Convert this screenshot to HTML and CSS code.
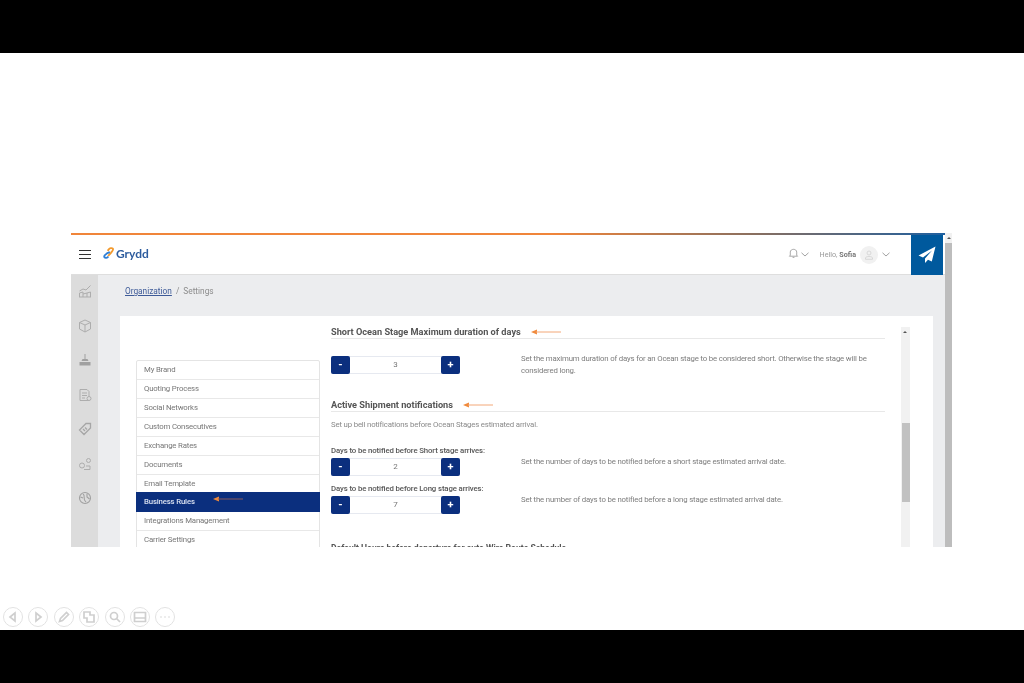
FILE: index.html
```html
<!DOCTYPE html>
<html lang="en">
<head>
    <meta charset="UTF-8">
    <meta name="viewport" content="width=device-width, initial-scale=1.0">
    <title>Grydd - Settings</title>
    <link rel="stylesheet" href="styles.css">
</head>
<body>
    <div class="letterbox"></div>
    <div class="slide">
        <div class="app">
            <div class="app-main">
                <div class="top-line"></div>
                <header class="header">
                    <div class="hamburger"><span></span><span></span><span></span></div>
                    <svg class="logo-mark" viewBox="0 0 14 14" width="12" height="12" fill="none" stroke-width="2.2">
                        <path d="M6 10.5 L9.5 6.5 C10.5 5 12.5 3.5 11.5 2 C10.5 .8 8 1 6.5 3 L5.5 4.5" stroke="#f39a2d"/>
                        <path d="M8 6 L4.5 7.5 C3 8.5 1 10 1.5 11.7 C2.5 13.2 5 13 6.2 11" stroke="#2f7fd6"/>
                    </svg>
                    <span class="logo-text">Grydd</span>
                    <div class="header-right">
                        <svg class="bell" viewBox="0 0 12 12" width="11" height="12" fill="none" stroke="#8a8a8a" stroke-width=".8">
                            <path d="M2.5 8.5 V5 C2.5 1 9.5 1 9.5 5 V8.5 L10.5 9.5 H1.5 Z M5 10.8 H7"/>
                        </svg>
                        <svg class="chev" viewBox="0 0 8 5" width="8" height="5" fill="none" stroke="#8a8a8a" stroke-width=".8"><path d="M.5 .8 L4 4 L7.5 .8"/></svg>
                        <span class="hello">Hello, <b>Sofia</b></span>
                        <div class="avatar">
                            <svg viewBox="0 0 10 10" width="10" height="10" fill="none" stroke="#d2d2d2" stroke-width=".8"><circle cx="5" cy="3" r="2"/><path d="M1.5 9.3 V8 C1.5 6 8.5 6 8.5 8 V9.3 Z"/></svg>
                        </div>
                        <svg class="chev chev-user" viewBox="0 0 8 5" width="8" height="5" fill="none" stroke="#8a8a8a" stroke-width=".8"><path d="M.5 .8 L4 4 L7.5 .8"/></svg>
                        <div class="send-tile">
                            <svg viewBox="0 0 18 18" width="18" height="18" fill="#fff"><path d="M17.5 .5 L.5 9.5 L5 11.5 L14 4.5 L7 12.5 L7 17 L10 13.8 L13.8 15.5 Z"/></svg>
                        </div>
                    </div>
                </header>
                <div class="body-row">
                    <nav class="sidebar">
                        <svg viewBox="0 0 14 14" width="14" height="14" fill="none" stroke="#adadad" stroke-width="1"><path d="M1 13 H13 M1.5 13 V9 L5 8 V13 M5 10 L9 9 V13 M9 9 L12.5 8 V13 M1.5 7 L5 5 L8 6 L12.5 1.5"/></svg>
                        <svg viewBox="0 0 14 14" width="14" height="14" fill="none" stroke="#adadad" stroke-width="1"><path d="M7 1 L12.5 3.5 V10 L7 13 L1.5 10 V3.5 Z M1.5 3.5 L7 6 L12.5 3.5 M7 6 V13"/></svg>
                        <svg viewBox="0 0 14 14" width="14" height="14" fill="#a0a0a0"><path d="M6.5 1 H7.5 V6 H6.5 Z M4.5 6 H9.5 L10.5 8 H3.5 Z M1.5 9 H12.5 V12.5 H1.5 Z"/></svg>
                        <svg viewBox="0 0 14 14" width="14" height="14" fill="none" stroke="#adadad" stroke-width="1"><path d="M2 1.5 H9 L11 3.5 V12.5 H2 Z M4 5 H9 M4 7.5 H9 M4 10 H7"/><circle cx="11" cy="10.5" r="2" fill="#dcdcdc"/></svg>
                        <svg viewBox="0 0 14 14" width="14" height="14" fill="none" stroke="#a6a6a6" stroke-width="1.3"><path d="M8 1.5 H12.5 V6 L6 12.5 L1.5 8 Z M5 7 L7 9 M7 5.5 L9 7.5"/></svg>
                        <svg viewBox="0 0 14 14" width="14" height="14" fill="none" stroke="#adadad" stroke-width="1"><circle cx="4" cy="8.5" r="2.5"/><circle cx="10.5" cy="3.5" r="2"/><path d="M6 12.5 H12 M12 12.5 V9 H8"/></svg>
                        <svg viewBox="0 0 14 14" width="14" height="14" fill="none" stroke="#a0a0a0" stroke-width="1.1"><circle cx="7" cy="7" r="5.5"/><path d="M5 3 C8 5 4 8 8 11 M9 2.5 V6 L11.5 8 M2.5 6 L5 7"/></svg>
                    </nav>
                    <main class="content">
                        <div class="breadcrumb"><a href="#">Organization</a><span class="sep">/</span>Settings</div>
                        <div class="card">
                            <ul class="menu">
                                <li>My Brand</li>
                                <li>Quoting Process</li>
                                <li>Social Networks</li>
                                <li>Custom Consecutives</li>
                                <li>Exchange Rates</li>
                                <li>Documents</li>
                                <li>Email Template</li>
                                <li class="active">Business Rules<svg class="arrow arrow-menu" viewBox="0 0 30 6" width="30" height="6"><path d="M0 3 L6 .5 V5.5 Z" fill="#f08a3c"/><path d="M5 3 H30" stroke="#8a5a5a" stroke-width="1"/></svg></li>
                                <li>Integrations Management</li>
                                <li>Carrier Settings</li>
                            </ul>
                            <section class="rules">
                                <h2 class="rule-title">Short Ocean Stage Maximum duration of days<svg class="arrow" viewBox="0 0 30 6" width="30" height="6"><path d="M0 3 L6 .5 V5.5 Z" fill="#f08a3c"/><path d="M5 3 H30" stroke="#f3a878" stroke-width="1"/></svg></h2>
                                <div class="rule-row row-first">
                                    <div class="stepper"><button>-</button><span class="value">3</span><button>+</button></div>
                                    <p class="rule-desc">Set the maximum duration of days for an Ocean stage to be considered short. Otherwise the stage will be considered long.</p>
                                </div>
                                <h2 class="rule-title title-second">Active Shipment notifications<svg class="arrow" viewBox="0 0 30 6" width="30" height="6"><path d="M0 3 L6 .5 V5.5 Z" fill="#f08a3c"/><path d="M5 3 H30" stroke="#f3a878" stroke-width="1"/></svg></h2>
                                <p class="rule-intro">Set up bell notifications before Ocean Stages estimated arrival.</p>
                                <div class="field-label label-first">Days to be notified before Short stage arrives:</div>
                                <div class="rule-row">
                                    <div class="stepper"><button>-</button><span class="value">2</span><button>+</button></div>
                                    <p class="rule-desc">Set the number of days to be notified before a short stage estimated arrival date.</p>
                                </div>
                                <div class="field-label">Days to be notified before Long stage arrives:</div>
                                <div class="rule-row">
                                    <div class="stepper"><button>-</button><span class="value">7</span><button>+</button></div>
                                    <p class="rule-desc">Set the number of days to be notified before a long stage estimated arrival date.</p>
                                </div>
                                <h2 class="rule-title title-third">Default Hours before departure for auto Wire Route Schedule</h2>
                            </section>
                            <div class="inner-scroll"><span class="scroll-up"></span><span class="inner-thumb"></span></div>
                        </div>
                    </main>
                </div>
            </div>
            <div class="outer-scroll"><span class="scroll-up"></span><span class="outer-thumb"></span></div>
        </div>
        <div class="player">
            <span class="round"><svg viewBox="0 0 20 20" width="20" height="20"><path d="M12 6 L7 10 L12 14 Z"/></svg></span>
            <span class="round"><svg viewBox="0 0 20 20" width="20" height="20"><path d="M8 6 L13 10 L8 14 Z"/></svg></span>
            <span class="round"><svg viewBox="0 0 20 20" width="20" height="20"><path d="M5.5 14.5 L6.5 11.5 L12.5 5.5 L14.5 7.5 L8.5 13.5 Z"/></svg></span>
            <span class="round"><svg viewBox="0 0 20 20" width="20" height="20"><path d="M5 5 H11 V8 H15 V15 H8 V11 H5 Z"/></svg></span>
            <span class="round"><svg viewBox="0 0 20 20" width="20" height="20"><circle cx="9" cy="9" r="3.5"/><path d="M11.5 11.5 L15 15"/></svg></span>
            <span class="round"><svg viewBox="0 0 20 20" width="20" height="20"><path d="M4.5 5.5 H15.5 V14.5 H4.5 Z M4.5 11 H15.5"/></svg></span>
            <span class="round"><svg viewBox="0 0 20 20" width="20" height="20"><path d="M5.5 10 H6.5 M9.5 10 H10.5 M13.5 10 H14.5"/></svg></span>
        </div>
    </div>
    <div class="letterbox"></div>
</body>
</html>
```

FILE: styles.css
```css
/* slide frame */
html, body {
    margin: 0;
    height: 100%;
}
body {
    display: flex;
    flex-direction: column;
    height: 683px;
    overflow: hidden;
    background-color: #fff;
    font-family: 'Roboto', 'Liberation Sans', sans-serif;
    color: #666;
}
.letterbox {
    height: 53px;
    background-color: #000;
    flex: none;
}
.slide {
    flex: 1;
    display: flex;
    flex-direction: column;
    padding-top: 180px;
    box-sizing: border-box;
    min-height: 0;
}

/* the screen recorded in the slide */
.app {
    display: flex;
    width: 882px;
    height: 314px;
    margin-left: 71px;
    overflow: hidden;
    flex: none;
    filter: blur(0.45px);
}
.app-main {
    width: 874px;
    display: flex;
    flex-direction: column;
}
.top-line {
    height: 2px;
    background: linear-gradient(to right, #f0853a 0%, #f0853a 55%, #8a6f5f 78%, #1f5f9f 100%);
    flex: none;
}
.header {
    height: 39px;
    flex: none;
    display: flex;
    align-items: center;
    padding-left: 8px;
    background-color: #fff;
    border-bottom: 1px solid #dedede;
}
.hamburger {
    width: 12px;
    display: flex;
    flex-direction: column;
    gap: 2.5px;
    margin-right: 12px;
}
.hamburger span {
    height: 1.5px;
    background-color: #333;
}
.logo-mark {
    margin-top: -3px;
}
.logo-text {
    margin: -3px 0 0 1px;
    font-family: 'Lato', sans-serif;
    font-weight: 700;
    font-size: 12px;
    color: #2d5c9e;
}
.header-right {
    margin-left: auto;
    display: flex;
    align-items: center;
    height: 100%;
}
.bell {
    margin-top: -3px;
}
.chev {
    margin-left: 2px;
}
.hello {
    margin-left: 11px;
    font-size: 7.2px;
    color: #999;
}
.hello b {
    color: #777;
}
.avatar {
    width: 18px;
    height: 18px;
    margin-left: 4px;
    border-radius: 50%;
    background-color: #f1f1f1;
    display: flex;
    align-items: center;
    justify-content: center;
}
.chev-user {
    margin-left: 4px;
}
.send-tile {
    width: 32px;
    height: 40px;
    margin-left: 21px;
    margin-right: 2px;
    background-color: #00599d;
    display: flex;
    align-items: center;
    justify-content: center;
}
.body-row {
    flex: 1;
    display: flex;
    min-height: 0;
}
.sidebar {
    width: 27px;
    flex: none;
    padding-top: 9px;
    box-sizing: border-box;
    background-color: #dcdcdc;
    display: flex;
    flex-direction: column;
    align-items: center;
    gap: 20.5px;
}
.sidebar svg {
    flex: none;
}
.content {
    flex: 1;
    min-width: 0;
    background-color: #ecedef;
    padding: 0 12px 0 22px;
    display: flex;
    flex-direction: column;
}
.breadcrumb {
    height: 41px;
    flex: none;
    padding: 11px 0 0 5px;
    box-sizing: border-box;
    font-size: 8.3px;
    line-height: 11px;
    color: #8c8c8c;
}
.breadcrumb a {
    color: #3d5a98;
}
.sep {
    margin: 0 4px;
}

/* card with the settings menu */
.card {
    flex: 1;
    display: flex;
    align-items: flex-start;
    background-color: #fff;
    padding-left: 16px;
    min-height: 0;
}
.menu {
    width: 184px;
    margin: 44px 11px 0 0;
    padding: 0;
    list-style: none;
    border: 1px solid #e4e4e4;
    border-radius: 2px 2px 0 0;
    box-sizing: border-box;
    flex: none;
}
.menu li {
    position: relative;
    height: 19px;
    line-height: 18px;
    padding-left: 7px;
    box-sizing: border-box;
    border-bottom: 1px solid #e8e8e8;
    font-size: 7.8px;
    letter-spacing: -0.17px;
    color: #777;
}
.menu li.active {
    margin: -2px -1px 0;
    padding-left: 8px;
    height: 20px;
    line-height: 20px;
    background-color: #0b2f7e;
    border-bottom: none;
    color: #d9e0f0;
    font-weight: 500;
}
.arrow {
    margin-left: 10px;
    vertical-align: 0;
}
.arrow-menu {
    position: absolute;
    left: 77px;
    top: 4px;
    margin: 0;
}

/* rules column */
.rules {
    width: 554px;
    flex: none;
    padding-top: 9px;
}
.rule-title {
    margin: 0;
    height: 13px;
    font-size: 9.2px;
    line-height: 13px;
    font-weight: 700;
    color: #555;
    border-bottom: 1px solid #e8e8e8;
    white-space: nowrap;
}
.title-second {
    margin-top: 22px;
}
.title-third {
    margin-top: 28px;
    font-size: 8.6px;
    border: none;
}
.rule-row {
    display: flex;
    gap: 61px;
    align-items: flex-start;
    margin-top: 2px;
}
.row-first {
    margin-top: 17px;
}
.rule-desc {
    margin: -2px 0 0;
    flex: 1;
    font-size: 7.8px;
    letter-spacing: -0.17px;
    line-height: 11.6px;
    color: #7d7d7d;
}
.row-first .rule-desc {
    margin-top: -3px;
}
.rule-intro {
    margin: 7px 0 0;
    font-size: 7.8px;
    letter-spacing: -0.17px;
    line-height: 11px;
    color: #8a8a8a;
}
.field-label {
    margin-top: 6.5px;
    height: 11px;
    font-size: 7.8px;
    letter-spacing: -0.12px;
    line-height: 11px;
    font-weight: 500;
    color: #555;
}
.label-first {
    margin-top: 15px;
}
.stepper {
    width: 129px;
    height: 18px;
    flex: none;
    display: flex;
    align-items: stretch;
    border: 1px solid #e6e9f0;
    border-width: 1px 0;
    border-radius: 2px;
    box-sizing: border-box;
    background-color: #fff;
}
.stepper button {
    width: 19px;
    margin: -1px 0;
    padding: 0;
    border: none;
    border-radius: 2px;
    background-color: #0b2f7e;
    color: #fff;
    font-family: 'Roboto', sans-serif;
    font-size: 11px;
    font-weight: 700;
    line-height: 16px;
}
.value {
    flex: 1;
    text-align: center;
    font-size: 8px;
    line-height: 16px;
    color: #777;
}

/* scrollbars */
.inner-scroll {
    position: relative;
    width: 9px;
    height: 400px;
    margin: 11px 0 0 16px;
    background-color: #f1f1f1;
    flex: none;
}
.inner-thumb {
    position: absolute;
    top: 96px;
    left: 1px;
    width: 8px;
    height: 79px;
    background-color: #c1c1c1;
}
.outer-scroll {
    position: relative;
    width: 7px;
    background-color: #f1f1f1;
    flex: none;
}
.outer-thumb {
    position: absolute;
    top: 10px;
    bottom: 0;
    left: 0;
    right: 0;
    background-color: #bdbdbd;
}
.scroll-up {
    position: absolute;
    top: 4px;
    left: 2px;
    border-left: 2px solid transparent;
    border-right: 2px solid transparent;
    border-bottom: 2px solid #555;
}

/* slide show controls under the screen */
.player {
    display: flex;
    gap: 5.4px;
    margin: 60px 0 0 3px;
    filter: blur(0.4px);
}
.round {
    width: 20px;
    height: 20px;
    border: 1.5px solid #e2e2e2;
    border-radius: 50%;
    box-sizing: border-box;
    display: flex;
    align-items: center;
    justify-content: center;
}
.round svg {
    flex: none;
    fill: none;
    stroke: #cfcfcf;
    stroke-width: 1.7;
}
```
